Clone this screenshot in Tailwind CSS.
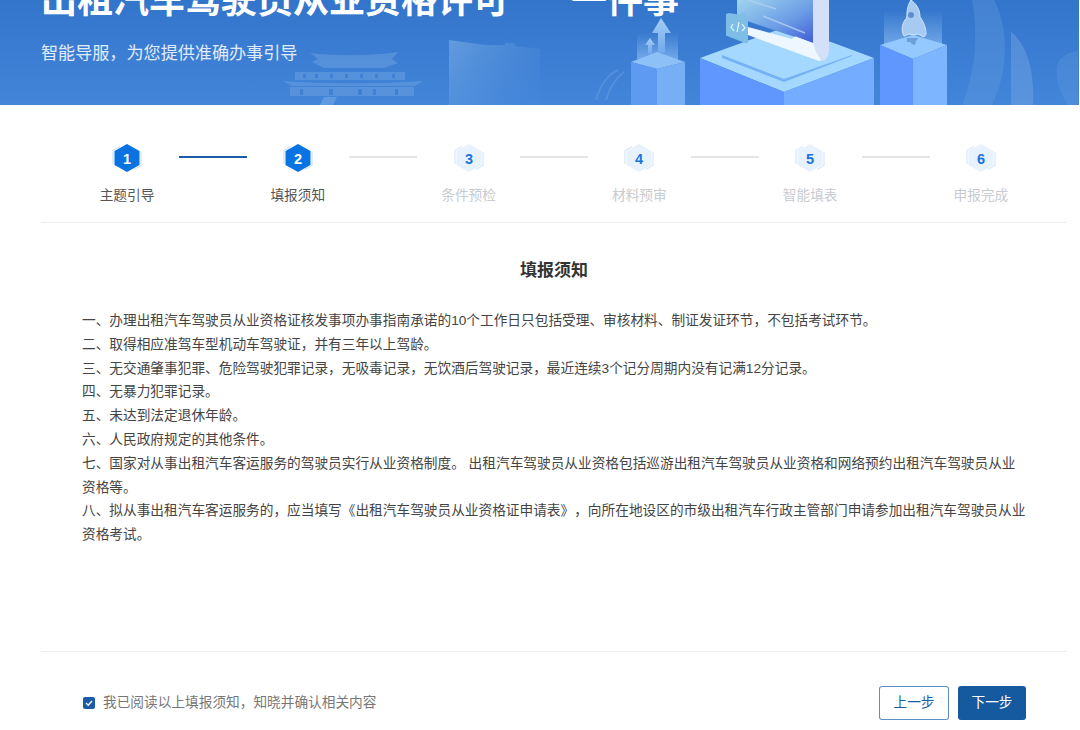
<!DOCTYPE html>
<html lang="zh-CN">
<head>
    <meta charset="UTF-8">
    <title>填报须知</title>
    <script src="https://cdn.jsdelivr.net/npm/@tailwindcss/browser@4"></script>
</head>
<body class="bg-white font-['Liberation_Sans','Noto_Sans_CJK_SC',sans-serif] overflow-hidden h-[730px]">
    <!-- Banner -->
    <div class="relative w-[1079px] h-[105px] overflow-hidden bg-gradient-to-b from-[#3375cb] to-[#4285d9]">
        <svg class="absolute inset-0" width="1079" height="105" viewBox="0 0 1079 105">
            <defs>
                <linearGradient id="glow" x1="0" y1="1" x2="0" y2="0">
                    <stop offset="0" stop-color="#a8d2fb" stop-opacity="0.5"/>
                    <stop offset="1" stop-color="#a8d2fb" stop-opacity="0"/>
                </linearGradient>
                <linearGradient id="paper" x1="0" y1="0" x2="1" y2="1">
                    <stop offset="0" stop-color="#9fd4ee"/>
                    <stop offset="0.55" stop-color="#6c9de6"/>
                    <stop offset="1" stop-color="#3c58d6"/>
                </linearGradient>
                <linearGradient id="tower" x1="0" y1="0" x2="1" y2="0.6">
                    <stop offset="0" stop-color="#7fb0e8" stop-opacity="0.6"/>
                    <stop offset="1" stop-color="#5c97df" stop-opacity="0.1"/>
                </linearGradient>
                <linearGradient id="arrow" x1="0" y1="0" x2="0" y2="1">
                    <stop offset="0" stop-color="#a4cdf6"/>
                    <stop offset="1" stop-color="#6fa8ea"/>
                </linearGradient>
            </defs>
            <!-- palace -->
            <g class="blur-[0.6px]" opacity="0.55">
                <g fill="#6a9fe0">
                    <path d="M310 53c25 3 60 3 88-1l-6 7 6 4-14 5h-60l-12-6 6-3z"/>
                    <path d="M295 72h110v8H295z"/>
                    <path d="M283 81c40 3 100 3 140 0l-8 5H292z"/>
                    <path d="M290 87h124v9H290z"/>
                </g>
                <g fill="#3f80d2">
                    <path d="M303 74h3v4h-3zM315 74h3v4h-3zM330 74h3v4h-3zM345 74h3v4h-3zM360 74h3v4h-3zM375 74h3v4h-3zM392 74h3v4h-3z"/>
                    <path d="M300 89h3v6h-3zM329 89h4v6h-4zM358 89h4v6h-4zM373 89h3v6h-3zM395 89h3v6h-3z"/>
                </g>
            </g>
            <path d="M320 105l4-8h13l-4 8z" fill="#86b3ea" opacity="0.45"/>
            <!-- tower -->
            <path d="M449 40l36 5h20v-2h10v3l25 3v56h-91z" fill="url(#tower)"/>
            <g stroke="#4f8bd6" stroke-width="1.2" stroke-dasharray="1.5 2.5" opacity="0.4">
                <path d="M466 52h50M466 57h50M466 62h50M466 67h50M466 72h50M466 77h50M466 82h50"/>
            </g>
            <!-- swooshes -->
            <path d="M972 0h22c16 30 14 72 -2 105h-30c14-34 16-72 10-105z" fill="#6ea2e0" opacity="0.3"/>
            <path d="M1011 32c14 10 24 36 22 73h-22z" fill="#7cabe5" opacity="0.4"/>
            <path d="M1058 62c6-7 12-10 20-11v54h-10c-8-12-14-26-10-43z" fill="#6ea2e0" opacity="0.25"/>
            <path d="M596 100c4-14 12-26 22-30M606 100c4-14 10-22 18-28" stroke="#7aaae4" stroke-width="2" fill="none" opacity="0.35"/>
            <!-- left small column -->
            <rect x="637" y="33" width="41" height="26" fill="url(#glow)"/>
            <path d="M661 18l-9 15h6v20h7V33h6z" fill="url(#arrow)"/>
            <path d="M650 38l-5 7h3v9h4v-9h3z" fill="url(#arrow)"/>
            <path d="M631 62l26-10 28 10-28 7z" fill="#8cc0f7"/>
            <path d="M631 62l26 7v36h-26z" fill="#5e99f2"/>
            <path d="M657 69l28-7v43h-28z" fill="#77aff5"/>
            <!-- centre block -->
            <path d="M700 58l88-32 86 32-90 34z" fill="#a4d8ff"/>
            <path d="M722 55l62 24 68-24v1l-68 26-62-24z" fill="#74b2f5"/>
            <path d="M700 58l84 34v13h-84z" fill="#5f97ff"/>
            <path d="M784 92l90-34v47h-90z" fill="#74acff"/>
            <!-- document -->
            <path d="M737 0h79v44l-66-22-13-5z" fill="url(#paper)"/>
            <path d="M748 0l28 9M763 16l42 17" stroke="#b4d0f0" stroke-width="1.5" fill="none" opacity="0.8"/>
            <path d="M813 0h16v50c0 6-3 11-8 11-3 0-6-2-8-5z" fill="#d3e0f8"/>
            <path d="M748 27l44 12c1-2 3-3 5-2l16 6c2 6 4 12 8 17-1 1-3 1-5 0l-68-25z" fill="#eef6ff"/>
            <!-- code card -->
            <path d="M726 14l3-1 12 2 1-3 3 1 0 3 3 2v25l-3 0-18-7c-1 0-1-1-1-2z" fill="#7dbde6"/>
            <path d="M733 24l-2 3 3 4M739 22l-2 10M742 24l3 4-3 3" stroke="#eaf6ff" stroke-width="1.2" fill="none"/>
            <!-- right column -->
            <rect x="884" y="10" width="58" height="36" fill="url(#glow)"/>
            <path d="M880 45l33-10 34 10-34 14z" fill="#93c9ff"/>
            <path d="M880 45l33 14v46h-33z" fill="#5f97ff"/>
            <path d="M913 59l34-14v60h-34z" fill="#7db6ff"/>
            <path d="M911 0c4 3 9 8 9 17 3 4 6 10 6 17l-2 3-6-3-4 1-5-1-5 2c-3-5-2-12 1-16 2-2 2-4 2-7 0-5 2-10 4-13z" fill="#a7caf2" stroke="#d4e6fb" stroke-width="1"/>
            <circle cx="911" cy="15" r="3" fill="#5f8ed0"/>
            <path d="M907 38h11l-2 3-1 4-3-1-2-2-3 0z" fill="#6f9edd"/>
        </svg>
        <div class="relative pl-[41px]">
            <h1 class="text-[36px] leading-[36px] font-bold text-white -mt-[17px] whitespace-nowrap">出租汽车驾驶员从业资格许可<span class="ml-[62px]">一件事</span></h1>
            <p class="mt-[23px] text-[17.1px] leading-[24px] text-white/85">智能导服，为您提供准确办事引导</p>
        </div>
    </div>

    <!-- Stepper -->
    <div class="mx-[41px] w-[1026px] h-[118px] border-b border-[#eeeeee] pt-[37px] px-[58px]">
        <div class="flex items-start justify-between">
            <div class="w-[56px] flex flex-col items-center shrink-0">
                <svg width="32" height="32" viewBox="0 0 32 32"><path d="M9 4.5L2 8.5V22M30 10v13.5L23 27.5" fill="none" stroke="#cfe2fa" stroke-width="1.2"/><path d="M16 2l12.5 7v14L16 30 3.5 23V9z" fill="#0a73e2"/><text x="16" y="21.5" text-anchor="middle" font-size="14.5" font-weight="700" fill="#fff" font-family="Liberation Sans">1</text></svg>
                <span class="mt-[12px] text-[13.68px] leading-[20px] text-[#555555] whitespace-nowrap">主题引导</span>
            </div>
            <div class="w-[68px] h-[2px] mt-[14px] ml-[1px] -mr-[1px] bg-[#1a5ca6]"></div>
            <div class="w-[56px] flex flex-col items-center shrink-0">
                <svg width="32" height="32" viewBox="0 0 32 32"><path d="M9 4.5L2 8.5V22M30 10v13.5L23 27.5" fill="none" stroke="#cfe2fa" stroke-width="1.2"/><path d="M16 2l12.5 7v14L16 30 3.5 23V9z" fill="#0a73e2"/><text x="16" y="21.5" text-anchor="middle" font-size="14.5" font-weight="700" fill="#fff" font-family="Liberation Sans">2</text></svg>
                <span class="mt-[12px] text-[13.68px] leading-[20px] text-[#555555] whitespace-nowrap">填报须知</span>
            </div>
            <div class="w-[68px] h-[2px] mt-[14px] bg-[#e5e5e5]"></div>
            <div class="w-[56px] flex flex-col items-center shrink-0">
                <svg width="32" height="32" viewBox="0 0 32 32"><path d="M9 4.5L2 8.5V22M30 10v13.5L23 27.5" fill="none" stroke="#d8e8fb" stroke-width="1.2"/><path d="M16 2l12.5 7v14L16 30 3.5 23V9z" fill="#e8f2fd"/><text x="16" y="21.5" text-anchor="middle" font-size="14.5" font-weight="700" fill="#1a73e0" font-family="Liberation Sans">3</text></svg>
                <span class="mt-[12px] text-[13.68px] leading-[20px] text-[#c8cbd0] whitespace-nowrap">条件预检</span>
            </div>
            <div class="w-[68px] h-[2px] mt-[14px] bg-[#e5e5e5]"></div>
            <div class="w-[56px] flex flex-col items-center shrink-0">
                <svg width="32" height="32" viewBox="0 0 32 32"><path d="M9 4.5L2 8.5V22M30 10v13.5L23 27.5" fill="none" stroke="#d8e8fb" stroke-width="1.2"/><path d="M16 2l12.5 7v14L16 30 3.5 23V9z" fill="#e8f2fd"/><text x="16" y="21.5" text-anchor="middle" font-size="14.5" font-weight="700" fill="#1a73e0" font-family="Liberation Sans">4</text></svg>
                <span class="mt-[12px] text-[13.68px] leading-[20px] text-[#c8cbd0] whitespace-nowrap">材料预审</span>
            </div>
            <div class="w-[68px] h-[2px] mt-[14px] bg-[#e5e5e5]"></div>
            <div class="w-[56px] flex flex-col items-center shrink-0">
                <svg width="32" height="32" viewBox="0 0 32 32"><path d="M9 4.5L2 8.5V22M30 10v13.5L23 27.5" fill="none" stroke="#d8e8fb" stroke-width="1.2"/><path d="M16 2l12.5 7v14L16 30 3.5 23V9z" fill="#e8f2fd"/><text x="16" y="21.5" text-anchor="middle" font-size="14.5" font-weight="700" fill="#1a73e0" font-family="Liberation Sans">5</text></svg>
                <span class="mt-[12px] text-[13.68px] leading-[20px] text-[#c8cbd0] whitespace-nowrap">智能填表</span>
            </div>
            <div class="w-[68px] h-[2px] mt-[14px] bg-[#e5e5e5]"></div>
            <div class="w-[56px] flex flex-col items-center shrink-0">
                <svg width="32" height="32" viewBox="0 0 32 32"><path d="M9 4.5L2 8.5V22M30 10v13.5L23 27.5" fill="none" stroke="#d8e8fb" stroke-width="1.2"/><path d="M16 2l12.5 7v14L16 30 3.5 23V9z" fill="#e8f2fd"/><text x="16" y="21.5" text-anchor="middle" font-size="14.5" font-weight="700" fill="#1a73e0" font-family="Liberation Sans">6</text></svg>
                <span class="mt-[12px] text-[13.68px] leading-[20px] text-[#c8cbd0] whitespace-nowrap">申报完成</span>
            </div>
        </div>
    </div>

    <!-- Notice -->
    <div class="mx-[41px] w-[1026px] h-[429px] border-b border-[#eeeeee] pl-[41px] pr-[39px]">
        <h2 class="pt-[36px] text-center pr-[2px] text-[17px] leading-[24px] font-bold text-[#333333]">填报须知</h2>
        <div class="mt-[26px] text-[13.68px] leading-[23.8px] text-[#444444] [text-spacing-trim:space-all]">
            <p>一、办理出租汽车驾驶员从业资格证核发事项办事指南承诺的10个工作日只包括受理、审核材料、制证发证环节，不包括考试环节。</p>
            <p>二、取得相应准驾车型机动车驾驶证，并有三年以上驾龄。</p>
            <p>三、无交通肇事犯罪、危险驾驶犯罪记录，无吸毒记录，无饮酒后驾驶记录，最近连续3个记分周期内没有记满12分记录。</p>
            <p>四、无暴力犯罪记录。</p>
            <p>五、未达到法定退休年龄。</p>
            <p>六、人民政府规定的其他条件。</p>
            <p>七、国家对从事出租汽车客运服务的驾驶员实行从业资格制度。 出租汽车驾驶员从业资格包括巡游出租汽车驾驶员从业资格和网络预约出租汽车驾驶员从业资格等。</p>
            <p>八、拟从事出租汽车客运服务的，应当填写《出租汽车驾驶员从业资格证申请表》，向所在地设区的市级出租汽车行政主管部门申请参加出租汽车驾驶员从业资格考试。</p>
        </div>
    </div>

    <!-- Footer -->
    <div class="mx-[41px] w-[1026px] pl-[42px] pr-[41px] pt-[34px] flex items-center justify-between">
        <label class="flex items-center gap-[8px] text-[13.68px] text-[#777777]">
            <span class="w-[12px] h-[12px] rounded-[2px] bg-[#1a5ca6] flex items-center justify-center">
                <svg width="10" height="10" viewBox="0 0 10 10"><path d="M2 5l2.2 2.2L8 3" stroke="#fff" stroke-width="1.3" fill="none"/></svg>
            </span>
            我已阅读以上填报须知，知晓并确认相关内容
        </label>
        <div class="flex gap-[9px]">
            <button class="w-[70px] h-[34px] rounded-[3px] border border-[#1a5ca6]/70 bg-white text-[13.68px] text-[#1a5ca6]">上一步</button>
            <button class="w-[68px] h-[34px] rounded-[3px] bg-[#15599f] text-[13.68px] text-white">下一步</button>
        </div>
    </div>
</body>
</html>
